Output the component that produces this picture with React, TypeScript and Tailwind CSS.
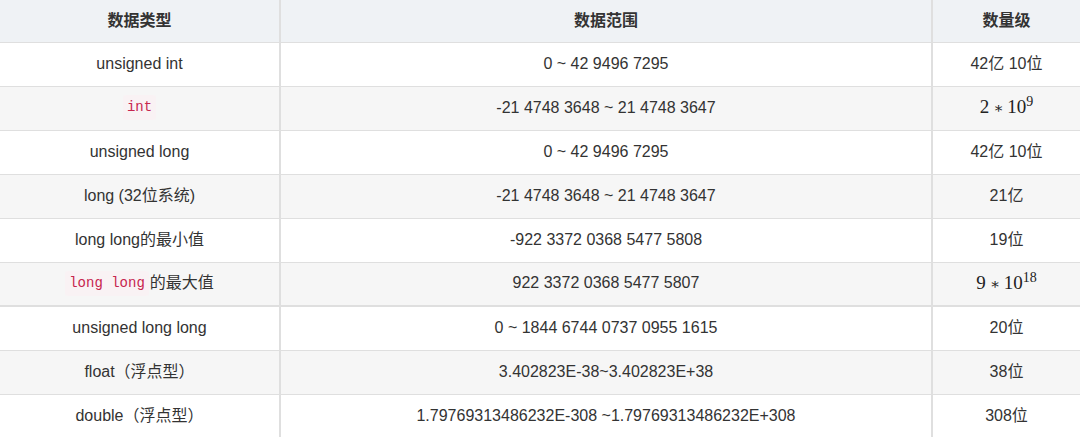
import React from "react";

type Row = {
  type: React.ReactNode;
  range: string;
  size: React.ReactNode;
  thick?: boolean;
};

const Code = ({ children }: { children: React.ReactNode }) => (
  <code className="rounded-[3px] bg-[#f9f2f4] px-[4px] py-[2px] font-['Liberation_Mono','DejaVu_Sans_Mono',monospace] text-[14px] text-[#c7254e]">
    {children}
  </code>
);

const Pow = ({ base, exp }: { base: string; exp: string }) => (
  <span className="font-['Liberation_Serif','DejaVu_Serif',serif] text-[19px] text-[#222]">
    {base}
    <span className="mx-[4px] text-[15px]">∗</span>
    10
    <span className="relative -top-[7px] align-baseline text-[14px]">{exp}</span>
  </span>
);

const rows: Row[] = [
  { type: "unsigned int", range: "0 ~ 42 9496 7295", size: "42亿 10位" },
  { type: <Code>int</Code>, range: "-21 4748 3648 ~ 21 4748 3647", size: <Pow base="2" exp="9" /> },
  { type: "unsigned long", range: "0 ~ 42 9496 7295", size: "42亿 10位" },
  { type: "long (32位系统)", range: "-21 4748 3648 ~ 21 4748 3647", size: "21亿" },
  { type: "long long的最小值", range: "-922 3372 0368 5477 5808", size: "19位" },
  {
    type: (
      <>
        <Code>long long</Code>
        <span className="ml-[1px]">的最大值</span>
      </>
    ),
    range: "922 3372 0368 5477 5807",
    size: <Pow base="9" exp="18" />,
    thick: true,
  },
  { type: "unsigned long long", range: "0 ~ 1844 6744 0737 0955 1615", size: "20位" },
  { type: "float（浮点型）", range: "3.402823E-38~3.402823E+38", size: "38位" },
  { type: "double（浮点型）", range: "1.79769313486232E-308 ~1.79769313486232E+308", size: "308位" },
];

export default function App() {
  return (
    <div className="h-[437px] w-[1080px] overflow-hidden bg-white font-['Liberation_Sans','Noto_Sans_CJK_SC',sans-serif] text-[16px] text-[#333]">
      <div className="flex h-[43px] border-b border-[#dfdfdf] bg-[#eff2f5] font-bold">
        <div className="flex w-[281px] items-center justify-center border-r-2 border-[#dfdfdf] pb-[1px]">数据类型</div>
        <div className="flex w-[652px] items-center justify-center border-r-2 border-[#dfdfdf] pb-[1px]">数据范围</div>
        <div className="flex flex-1 items-center justify-center pb-[1px]">数量级</div>
      </div>
      {rows.map((r, i) => (
        <div
          key={i}
          className={`flex h-[44px] border-[#dfdfdf] ${r.thick ? "border-b-2" : "border-b"} ${
            i % 2 === 1 ? "bg-[#f6f6f6]" : "bg-white"
          }`}
        >
          <div className="flex w-[281px] items-center justify-center border-r-2 border-[#dfdfdf] pb-[2px]">{r.type}</div>
          <div className="flex w-[652px] items-center justify-center border-r-2 border-[#dfdfdf] pb-[2px]">{r.range}</div>
          <div className="flex flex-1 items-center justify-center pb-[2px]">{r.size}</div>
        </div>
      ))}
    </div>
  );
}
